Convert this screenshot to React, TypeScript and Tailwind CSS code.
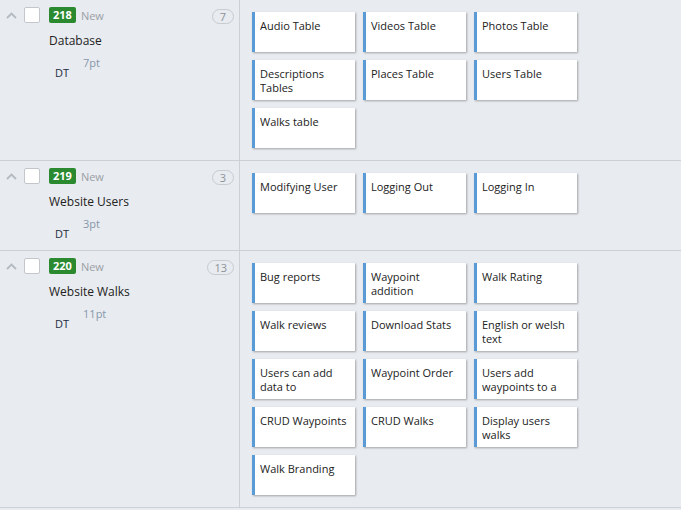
import React from 'react';

type Story = {
  id: number;
  title: string;
  points: string;
  count: number;
  tasks: string[];
};

const STORIES: Story[] = [
  {
    id: 218,
    title: 'Database',
    points: '7pt',
    count: 7,
    tasks: ['Audio Table', 'Videos Table', 'Photos Table', 'Descriptions Tables', 'Places Table', 'Users Table', 'Walks table'],
  },
  {
    id: 219,
    title: 'Website Users',
    points: '3pt',
    count: 3,
    tasks: ['Modifying User', 'Logging Out', 'Logging In'],
  },
  {
    id: 220,
    title: 'Website Walks',
    points: '11pt',
    count: 13,
    tasks: [
      'Bug reports',
      'Waypoint addition',
      'Walk Rating',
      'Walk reviews',
      'Download Stats',
      'English or welsh text',
      'Users can add data to',
      'Waypoint Order',
      'Users add waypoints to a',
      'CRUD Waypoints',
      'CRUD Walks',
      'Display users walks',
      'Walk Branding',
    ],
  },
];

const Chevron = () => (
  <svg width="11" height="7" viewBox="0 0 11 7" fill="none">
    <path d="M1 6L5.5 1.5L10 6" stroke="#b4bac2" strokeWidth="1.8" />
  </svg>
);

const TaskCard = ({ label }: { label: string }) => (
  <div className="h-10 bg-white border-l-[3px] border-[#5b9bd5] shadow-[1px_1px_2px_rgba(0,0,0,0.3)] pl-[5px] pr-1 pt-[7px] text-[11px] leading-[14px] text-[#222] overflow-hidden">
    <div className="line-clamp-2">{label}</div>
  </div>
);

const StoryRow = ({ story }: { story: Story }) => (
  <div className="flex border-b border-[#cdd1d6]">
    {/* Story info column */}
    <div className="w-[240px] shrink-0 border-r border-[#cdd1d6] min-h-[89px]">
      <div className="flex items-center pt-[7px] pl-[6px] pr-[5px] h-[23px]">
        <Chevron />
        <div className="ml-[7px] w-4 h-4 bg-white border border-[#c3c7cc] rounded-[2px]" />
        <span className="ml-[9px] h-4 px-[4px] rounded-[2px] bg-[#2b8a2f] text-white text-[11px] font-bold leading-4 flex items-center">
          {story.id}
        </span>
        <span className="ml-[5px] mt-[2px] text-[11px] text-[#9ba0a6]">New</span>
        <span className="ml-auto mt-[3px] h-[15px] min-w-[22px] px-[6px] rounded-full border border-[#c7cbd0] text-[11px] leading-[13px] text-[#8d9298] flex items-center justify-center">
          {story.count}
        </span>
      </div>
      <div className="ml-[49px] mt-[9px] text-[12px] leading-[17px] text-[#222]">{story.title}</div>
      <div className="flex ml-[55px] mt-[7px]">
        <span className="mt-[10px] text-[11px] leading-[14px] text-[#1c2b44]">DT</span>
        <span className="ml-[14px] text-[11px] leading-[14px] text-[#8797ab]">{story.points}</span>
      </div>
    </div>
    {/* Task cards */}
    <div className="flex-1 p-3">
      <div className="grid grid-cols-[103px_103px_103px] gap-2">
        {story.tasks.map((t) => (
          <TaskCard key={t} label={t} />
        ))}
      </div>
    </div>
  </div>
);

export default function App() {
  return (
    <div
      className="w-[681px] h-[510px] overflow-hidden bg-[#e8ebef]"
      style={{ fontFamily: '"Open Sans", "Noto Sans", sans-serif' }}
    >
      {STORIES.map((s) => (
        <StoryRow key={s.id} story={s} />
      ))}
    </div>
  );
}
